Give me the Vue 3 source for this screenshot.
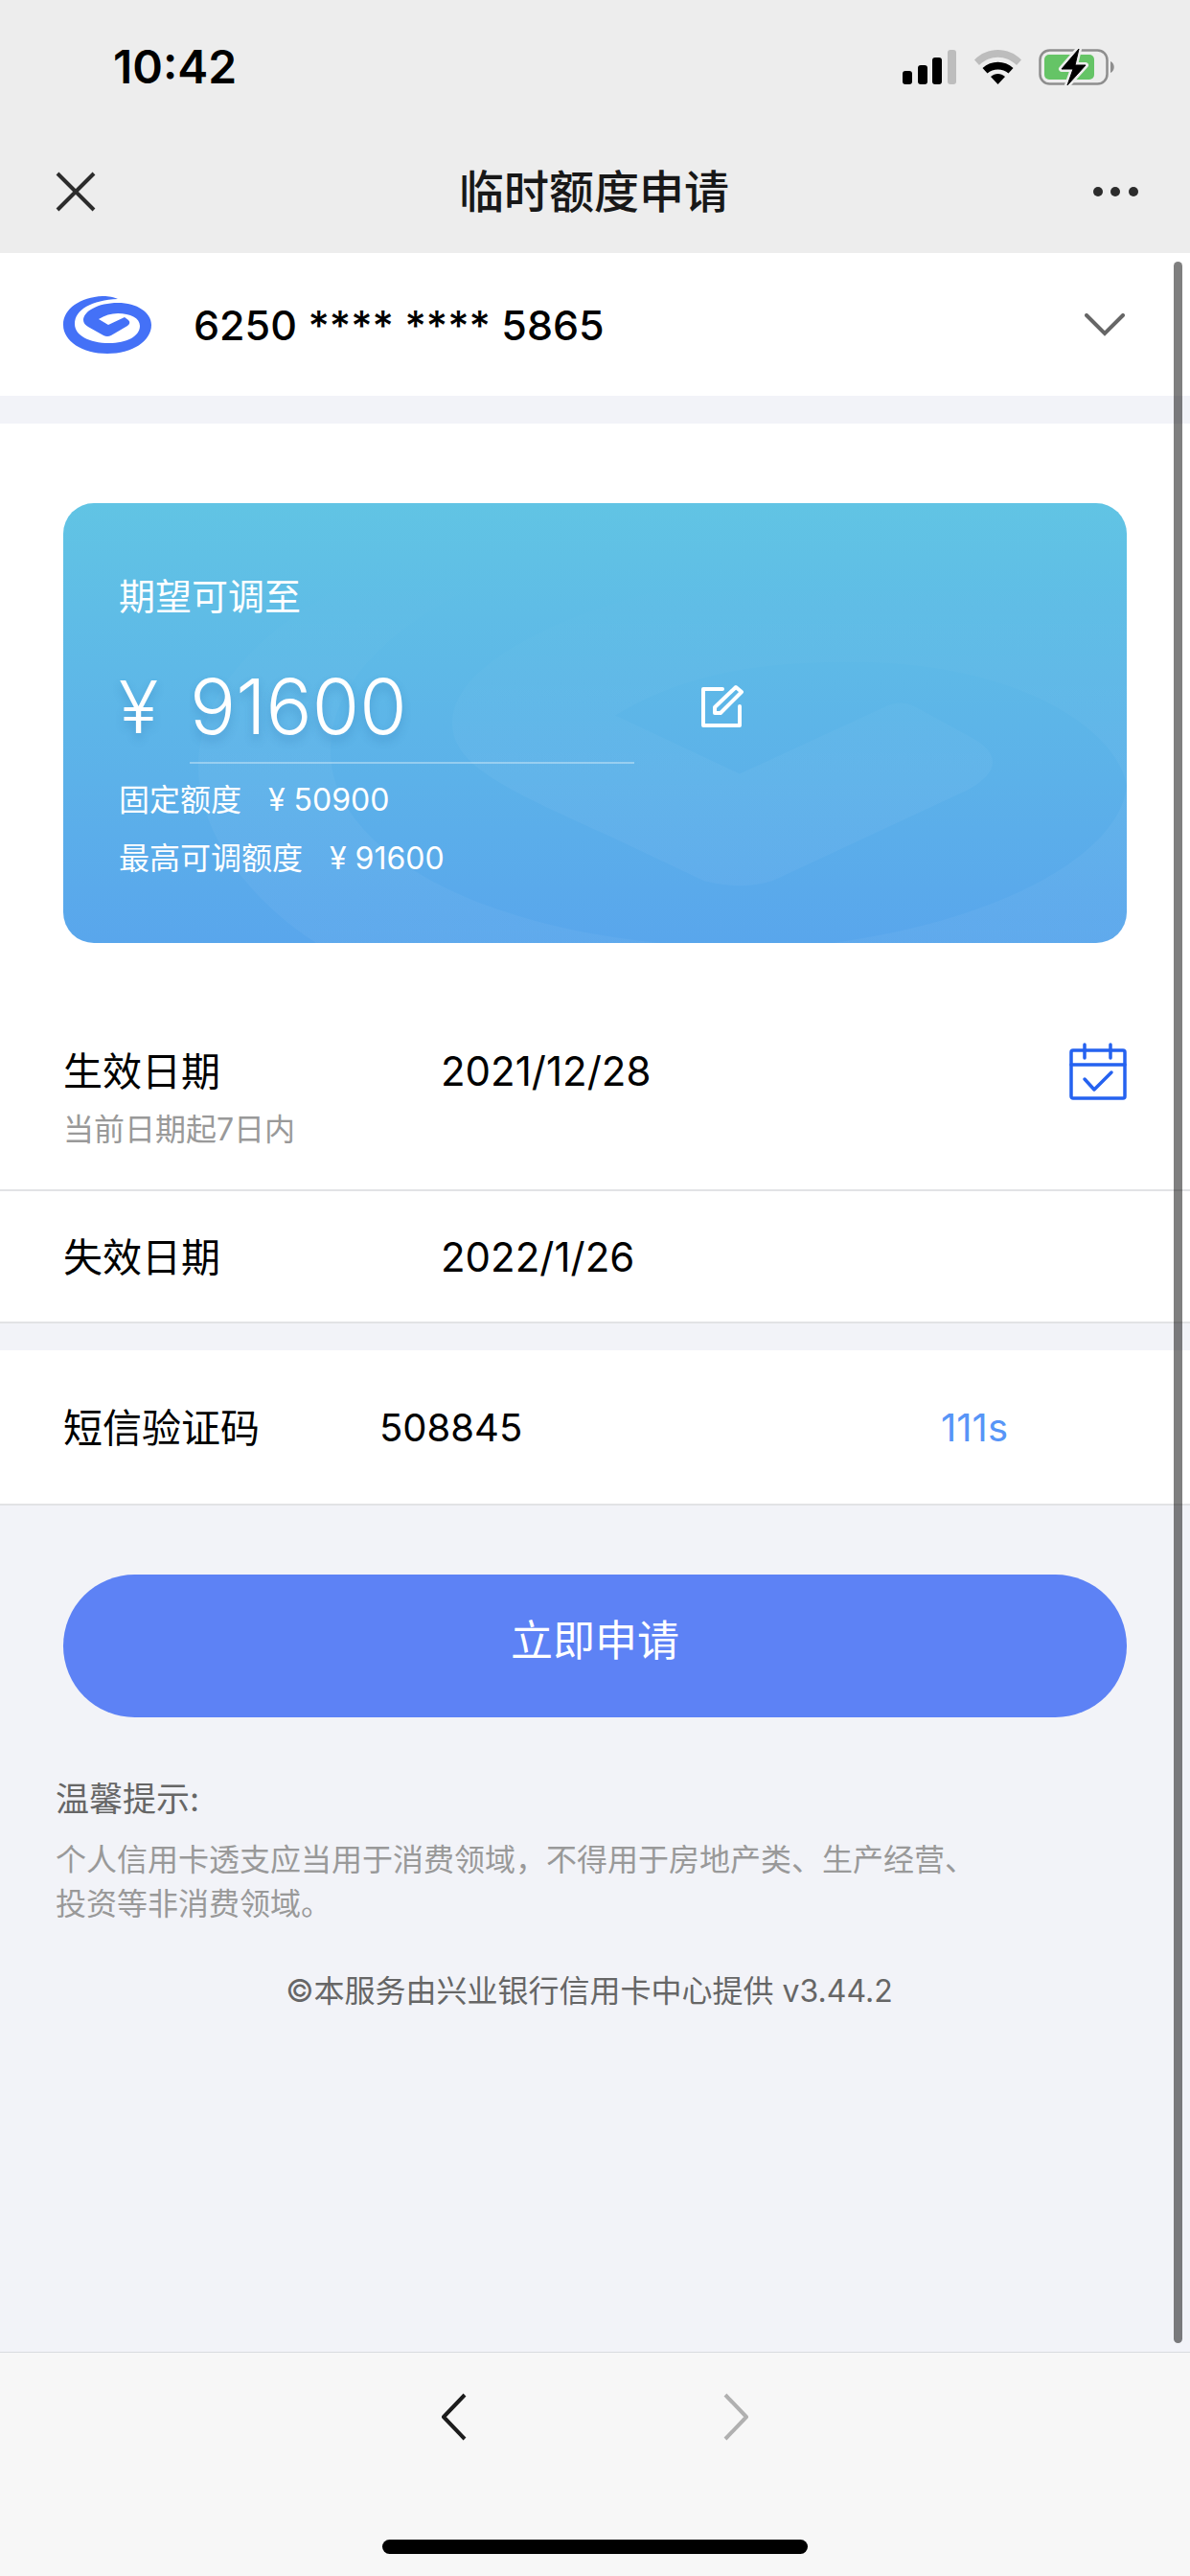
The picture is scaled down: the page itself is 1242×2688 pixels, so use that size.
<script setup>
import { ref } from 'vue'

const amount = ref('91600')
const smsCode = ref('508845')
const limits = [
  { label: '固定额度', value: '¥ 50900' },
  { label: '最高可调额度', value: '¥ 91600' },
]
</script>

<template>
  <div class="screen">
    <header class="top">
      <div class="status">
        <time class="clock">10:42</time>
        <div class="indicators">
          <svg class="signal" viewBox="0 0 57 36" aria-label="信号">
            <rect x="0" y="22" width="10" height="14" rx="3" />
            <rect x="16" y="16" width="10" height="20" rx="3" />
            <rect x="31" y="8" width="10" height="28" rx="3" />
            <rect x="47" y="0" width="9" height="36" rx="3" fill="#bdbdbd" />
          </svg>
          <svg class="wifi" viewBox="0 0 49 36" aria-label="无线网络">
            <path d="M0 10.500C13-3.500 36-3.500 49 10.500L44 16C33 5 16 5 5 16Z" fill="#bdbdbd" />
            <path d="M8.500 19C17.500 10.500 31.500 10.500 40.500 19L35.500 24.500C29.500 19 19.500 19 13.500 24.500Z" />
            <path d="M17 28C21.500 24 27.500 24 32 28L24.500 36Z" />
          </svg>
          <svg class="battery" viewBox="0 0 80 40" aria-label="正在充电">
            <rect x="1.500" y="2.500" width="70" height="35" rx="10" fill="none" stroke="#8e8e8e" stroke-width="2.500" />
            <path d="M75 14C80 16 80 24 75 26Z" fill="#8e8e8e" />
            <rect x="6" y="7" width="52" height="26" rx="5" fill="#65c466" />
            <path d="M42 1L24 22H36L30 39L49 18H38Z" stroke="#ededed" stroke-width="6" stroke-linejoin="round" />
            <path d="M42 1L24 22H36L30 39L49 18H38Z" stroke="#000" stroke-width="1" stroke-linejoin="round" />
          </svg>
        </div>
      </div>
      <nav class="titlebar">
        <button class="icon-button" type="button" aria-label="关闭">
          <svg width="42" height="42" viewBox="0 0 42 42"><path d="M2 2L40 40M40 2L2 40" fill="none" stroke="#2c2c2c" stroke-width="4" /></svg>
        </button>
        <h1>临时额度申请</h1>
        <button class="icon-button" type="button" aria-label="更多">
          <svg width="48" height="12" viewBox="0 0 48 12" fill="#2c2c2c"><circle cx="6" cy="6" r="5" /><circle cx="24" cy="6" r="5" /><circle cx="43" cy="6" r="5" /></svg>
        </button>
      </nav>
    </header>

    <main class="page">
      <button class="account" type="button">
        <svg class="logo" viewBox="0 0 92 60" aria-hidden="true">
          <path d="M57 3C50 0 45 0 41 0C18 1 0 13 0 30C0 47 20 60 46 60C72 60 92 47 92 30C92 17 77 7 57 7C36 7 21 16 21 25C21 28 23 30 26 32L42 41Q46 43 50 41L67 31Q71 28 68 25L64 22L47 30L37 24C43 20 50 18 57 18C70 18 80 23 80 31C80 42 66 49 48 49C27 49 12 41 12 29C12 14 30 4 57 3Z" fill="#4471f7" />
        </svg>
        <span class="number">6250 **** **** 5865</span>
        <svg width="42" height="24" viewBox="0 0 42 24" aria-hidden="true"><path d="M2 2L21 21L40 2" fill="none" stroke="#666" stroke-width="4" stroke-linecap="round" /></svg>
      </button>

      <section class="quota">
        <div class="card">
          <svg class="watermark" viewBox="66 525 1110 460" preserveAspectRatio="none" aria-hidden="true">
            <defs>
              <linearGradient id="fade" gradientUnits="userSpaceOnUse" x1="0" y1="600" x2="0" y2="820">
                <stop offset="0" stop-color="#fff" stop-opacity="0" />
                <stop offset="1" stop-color="#fff" stop-opacity="0.04" />
              </linearGradient>
            </defs>
            <g fill="url(#fade)">
              <path d="M380 600C260 660 207 730 207 800C207 870 260 940 330 985H690C480 965 345 880 345 785C345 710 410 650 520 600Z" />
              <path d="M1176 600H760C600 630 472 690 472 755C472 800 530 825 640 875L735 920Q772 930 806 920L1010 825Q1062 795 1010 768L955 738Q940 730 924 738L772 808L642 747C720 700 800 691 890 691C1060 691 1165 760 1176 820Z" />
              <path d="M870 985C1050 960 1170 890 1176 820V985Z" />
            </g>
          </svg>
          <label class="card-label" for="amount">期望可调至</label>
          <div class="amount-row">
            <span class="currency">¥</span>
            <input id="amount" v-model="amount" class="amount" type="text" inputmode="numeric" />
            <button class="icon-button" type="button" aria-label="修改额度">
              <svg width="46" height="46" viewBox="0 0 46 46" fill="none" stroke="#fff" stroke-width="4" stroke-linejoin="round" stroke-linecap="round">
                <path d="M23 5H3V43H41V23" />
                <path d="M37 3L43 8L21 30H15V24Z" />
              </svg>
            </button>
          </div>
          <p v-for="item in limits" :key="item.label" class="limit">
            <span>{{ item.label }}</span><span>{{ item.value }}</span>
          </p>
        </div>
      </section>

      <section class="row start">
        <div class="start-line">
          <h2>生效日期</h2>
          <span class="date">2021/12/28</span>
          <button class="icon-button" type="button" aria-label="选择日期">
            <svg width="60" height="60" viewBox="0 0 60 60" fill="none" stroke="#2562f0" stroke-width="3.500" stroke-linecap="round" stroke-linejoin="round">
              <rect x="2" y="8" width="56" height="50" rx="2" />
              <path d="M2 23H58M16 2V16M43 2V16M16 38L26 49L44 31" />
            </svg>
          </button>
        </div>
        <p class="hint">当前日期起7日内</p>
      </section>

      <section class="row end">
        <h2>失效日期</h2>
        <span class="date">2022/1/26</span>
      </section>

      <section class="row sms">
        <label class="sms-label" for="sms">短信验证码</label>
        <input id="sms" v-model="smsCode" class="code" type="text" inputmode="numeric" />
        <button class="countdown" type="button" disabled>111s</button>
      </section>

      <button class="apply" type="button">立即申请</button>

      <section class="tips">
        <h3>温馨提示:</h3>
        <p>个人信用卡透支应当用于消费领域，不得用于房地产类、生产经营、投资等非消费领域。</p>
      </section>
      <footer class="provider">©本服务由兴业银行信用卡中心提供 v3.44.2</footer>
      <div class="scrollbar"></div>
    </main>

    <div class="toolbar">
      <div class="history">
        <button class="icon-button" type="button" aria-label="后退">
          <svg width="28" height="52" viewBox="0 0 28 52"><path d="M25 3L3 26L25 49" fill="none" stroke="#1c1c1c" stroke-width="4" stroke-linejoin="round" /></svg>
        </button>
        <button class="icon-button" type="button" aria-label="前进" disabled>
          <svg width="28" height="52" viewBox="0 0 28 52"><path d="M3 3L25 26L3 49" fill="none" stroke="#b0b0b0" stroke-width="4" stroke-linejoin="round" /></svg>
        </button>
      </div>
      <div class="home-indicator"></div>
    </div>
  </div>
</template>

<style>
body {
  margin: 0;
}
</style>

<style scoped>
.screen {
  display: flex;
  flex-direction: column;
  min-height: 100vh;
  background: #f2f3f8;
  color: #000;
  font-family: Inter, "Noto Sans CJK SC", sans-serif;
  font-size: 40px;
  line-height: 48px;
}
h1,
h2,
h3,
p {
  margin: 0;
  font-weight: 400;
}
button,
input {
  margin: 0;
  padding: 0;
  border: 0;
  background: none;
  color: inherit;
  font: inherit;
}
svg {
  display: block;
  flex: none;
}
.icon-button {
  flex: none;
}
.top {
  background: #ededed;
}
.status {
  display: flex;
  justify-content: space-between;
  align-items: center;
  height: 140px;
  padding: 0 78px 0 118px;
}
.clock {
  font-size: 48px;
  font-weight: 600;
}
.indicators {
  display: flex;
  align-items: center;
  gap: 18px;
}
.signal {
  width: 57px;
  height: 36px;
}
.wifi {
  width: 49px;
  height: 36px;
}
.battery {
  width: 80px;
  height: 40px;
}
.titlebar {
  display: flex;
  justify-content: space-between;
  align-items: center;
  height: 124px;
  padding: 0 54px 4px 58px;
  box-sizing: border-box;
}
h1 {
  color: #181818;
  font-size: 47px;
  font-weight: 500;
}
.page {
  position: relative;
  flex: 1;
  display: flex;
  flex-direction: column;
}
.account {
  display: flex;
  align-items: center;
  height: 149px;
  padding: 0 68px 0 66px;
  background: #fff;
  text-align: left;
}
.logo {
  width: 92px;
  height: 60px;
}
.number {
  flex: 1;
  margin-left: 44px;
  font-size: 43px;
  font-weight: 500;
}
.quota {
  margin-top: 29px;
  padding: 83px 66px 81px;
  background: #fff;
}
.card {
  position: relative;
  display: flex;
  flex-direction: column;
  padding: 73px 58px 58px;
  border-radius: 32px;
  overflow: hidden;
  background: linear-gradient(#61c4e4, #59a6ec);
  color: #fff;
  font-weight: 300;
}
.watermark {
  position: absolute;
  inset: 0;
  width: 100%;
  height: 100%;
}
.card-label,
.amount-row,
.limit {
  position: relative;
}
.card-label {
  font-size: 38px;
  font-weight: 400;
}
.amount-row {
  display: flex;
  align-items: center;
  height: 120px;
  margin: 31px 0 7px;
  text-shadow: 0 6px 10px rgba(40, 110, 170, 0.3);
}
.currency {
  width: 74px;
  font-size: 76px;
}
.amount {
  width: 464px;
  height: 120px;
  margin-right: 69px;
  border-bottom: 2px solid rgba(255, 255, 255, 0.35);
  box-sizing: border-box;
  font-size: 80px;
  text-shadow: inherit;
}
.limit {
  display: flex;
  gap: 28px;
  height: 61px;
  font-size: 32px;
  line-height: 61px;
}
.row {
  border-bottom: 2px solid #e2e3e5;
  background: #fff;
}
.start {
  padding: 14px 66px 40px;
}
.start-line {
  display: flex;
  align-items: center;
  height: 78px;
}
h2 {
  width: 394px;
  font-size: 41px;
}
.date {
  flex: 1;
  font-size: 42px;
}
.hint {
  color: #999;
  font-size: 32px;
  line-height: 44px;
}
.end {
  display: flex;
  align-items: center;
  height: 134px;
  padding: 2px 66px 0;
}
.sms {
  display: flex;
  align-items: center;
  height: 158px;
  margin-top: 28px;
  padding: 2px 190px 0 66px;
}
.sms-label {
  width: 330px;
  font-size: 41px;
}
.code {
  flex: 1;
  min-width: 0;
}
.countdown {
  color: #5795f7;
}
.apply {
  height: 149px;
  margin: 72px 66px 0;
  padding-bottom: 12px;
  border-radius: 75px;
  background: #5d82f5;
  color: #fff;
  font-size: 44px;
}
.tips {
  padding: 60px 200px 0 58px;
  color: #999;
  font-size: 32px;
  line-height: 46px;
}
h3 {
  margin-bottom: 16px;
  color: #666;
  font-size: 35px;
  line-height: 50px;
}
.provider {
  margin: 44px 12px 0 0;
  color: #666;
  font-size: 32px;
  text-align: center;
}
.scrollbar {
  position: absolute;
  top: 9px;
  right: 8px;
  bottom: 9px;
  width: 9px;
  border-radius: 5px;
  background: rgba(0, 0, 0, 0.5);
}
.toolbar {
  border-top: 1px solid #d9dbe0;
  background: #f7f7f7;
}
.history {
  display: flex;
  justify-content: center;
  align-items: center;
  gap: 266px;
  height: 134px;
}
.home-indicator {
  width: 444px;
  height: 15px;
  margin: 61px auto 23px;
  border-radius: 8px;
  background: #000;
}
</style>
